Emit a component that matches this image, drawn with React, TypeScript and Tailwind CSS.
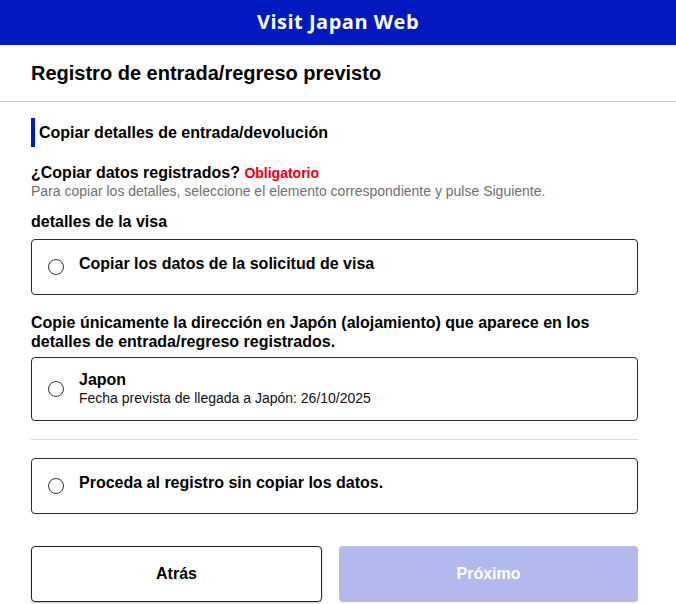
import { useState } from 'react';

// ── Radio option card ────────────────────────────────────────────────────────

function OptionCard({
  selected,
  onSelect,
  title,
  sub,
}: {
  selected: boolean;
  onSelect: () => void;
  title: string;
  sub?: string;
}) {
  return (
    <button
      type="button"
      onClick={onSelect}
      className={[
        'flex w-full items-center gap-[15px] rounded-[4px] border border-[#2b2b2b] bg-white pl-[16px] pr-4 text-left',
        sub ? 'h-[64px]' : 'h-[56px]',
      ].join(' ')}
    >
      <span className="flex h-[16px] w-[16px] shrink-0 items-center justify-center rounded-full border border-[#333] bg-white">
        {selected && <span className="h-[8px] w-[8px] rounded-full bg-[#0019c0]" />}
      </span>
      <span className={sub ? 'flex flex-col -mt-[1px]' : 'flex flex-col -mt-[8px]'}>
        <span className="text-[16px] font-bold leading-[19px] text-black">{title}</span>
        {sub && <span className="text-[14px] leading-[18px] text-[#111]">{sub}</span>}
      </span>
    </button>
  );
}

// ── Page ─────────────────────────────────────────────────────────────────────

export default function App() {
  const [choice, setChoice] = useState<string | null>(null);

  return (
    <div className="min-h-screen bg-white font-['Liberation_Sans',Arial,sans-serif] text-black">
      {/* Header */}
      <header className="flex h-[45px] items-center justify-center bg-[#0019c0]">
        <h1 className="-mt-[2px] font-['Open_Sans',sans-serif] text-[20px] font-bold tracking-[0.5px] text-white">
          Visit Japan Web
        </h1>
      </header>

      {/* Page title */}
      <div className="flex h-[57px] items-center border-b border-[#c8c8c8] px-[31px]">
        <h2 className="text-[20px] font-bold">Registro de entrada/regreso previsto</h2>
      </div>

      <main className="pl-[31px] pr-[38px] pt-[16px]">
        {/* Section heading */}
        <div className="flex h-[29px] items-center border-l-[4px] border-[#0019c0] pl-[4px]">
          <h3 className="text-[16px] font-bold">Copiar detalles de entrada/devolución</h3>
        </div>

        {/* Question */}
        <div className="mt-[16px]">
          <p className="text-[16px] font-bold leading-[19px]">
            ¿Copiar datos registrados?{' '}
            <span className="text-[14px] text-[#e60012]">Obligatorio</span>
          </p>
          <p className="text-[14px] leading-[16px] text-[#707070]">
            Para copiar los detalles, seleccione el elemento correspondiente y pulse Siguiente.
          </p>
        </div>

        <p className="mt-[13px] text-[16px] font-bold leading-[19px]">detalles de la visa</p>
        <div className="mt-[8px]">
          <OptionCard
            selected={choice === 'visa'}
            onSelect={() => setChoice('visa')}
            title="Copiar los datos de la solicitud de visa"
          />
        </div>

        <p className="mt-[18px] text-[16px] font-bold leading-[19px]">
          Copie únicamente la dirección en Japón (alojamiento) que aparece en los detalles de
          entrada/regreso registrados.
        </p>
        <div className="mt-[6px]">
          <OptionCard
            selected={choice === 'japan'}
            onSelect={() => setChoice('japan')}
            title="Japon"
            sub="Fecha prevista de llegada a Japón: 26/10/2025"
          />
        </div>

        <hr className="mt-[18px] border-[#dcdcdc]" />

        <div className="mt-[18px]">
          <OptionCard
            selected={choice === 'none'}
            onSelect={() => setChoice('none')}
            title="Proceda al registro sin copiar los datos."
          />
        </div>

        {/* Actions */}
        <div className="mt-[32px] flex gap-[17px]">
          <button
            type="button"
            className="h-[56px] w-[291px] shrink-0 rounded-[4px] border border-[#222] bg-white text-[16px] font-bold shadow-[0_1px_2px_rgba(0,0,0,0.25)]"
          >
            Atrás
          </button>
          <button
            type="button"
            disabled={!choice}
            className={[
              'h-[56px] flex-1 rounded-[4px] text-[16px] font-bold text-white',
              choice ? 'bg-[#0019c0]' : 'bg-[#b3b9ec]',
            ].join(' ')}
          >
            Próximo
          </button>
        </div>
      </main>
    </div>
  );
}
